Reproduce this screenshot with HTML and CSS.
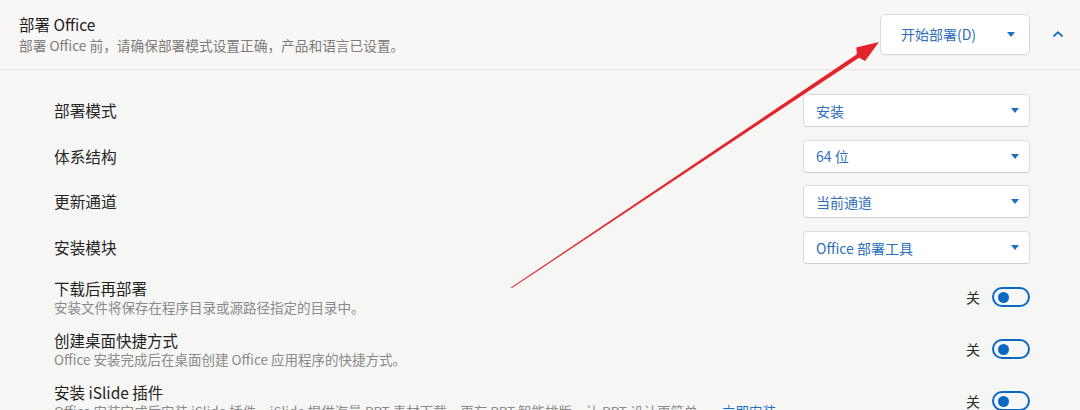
FILE: index.html
```html
<!DOCTYPE html>
<html lang="zh-CN">
<head>
<meta charset="utf-8">
<title>部署 Office</title>
<link rel="stylesheet" href="styles.css">
</head>
<body>
<div class="page">
  <header class="header">
    <div class="head-text">
      <div class="title">部署 Office</div>
      <div class="subtitle">部署 Office 前，请确保部署模式设置正确，产品和语言已设置。</div>
    </div>
    <div class="head-actions">
      <button class="split-btn">
        <span class="split-label">开始部署(D)</span>
        <span class="caret"></span>
      </button>
      <div class="chev-wrap">
        <svg class="chev" width="10" height="6" viewBox="0 0 10 6"><path d="M1 5 L5 1.2 L9 5" fill="none" stroke="#1a6fc4" stroke-width="1.8" stroke-linecap="round" stroke-linejoin="round"/></svg>
      </div>
    </div>
  </header>

  <main class="content">
    <div class="select-rows">
      <div class="select-row">
        <span class="label">部署模式</span>
        <div class="combo"><span>安装</span><span class="caret"></span></div>
      </div>
      <div class="select-row">
        <span class="label">体系结构</span>
        <div class="combo"><span>64 位</span><span class="caret"></span></div>
      </div>
      <div class="select-row">
        <span class="label">更新通道</span>
        <div class="combo"><span>当前通道</span><span class="caret"></span></div>
      </div>
      <div class="select-row">
        <span class="label">安装模块</span>
        <div class="combo"><span>Office 部署工具</span><span class="caret"></span></div>
      </div>
    </div>

    <div class="toggle-rows">
      <div class="toggle-row">
        <div class="t-text">
          <div class="t-title">下载后再部署</div>
          <div class="t-desc">安装文件将保存在程序目录或源路径指定的目录中。</div>
        </div>
        <div class="t-ctrl"><span class="t-state">关</span><span class="switch"><span class="knob"></span></span></div>
      </div>
      <div class="toggle-row">
        <div class="t-text">
          <div class="t-title">创建桌面快捷方式</div>
          <div class="t-desc">Office 安装完成后在桌面创建 Office 应用程序的快捷方式。</div>
        </div>
        <div class="t-ctrl"><span class="t-state">关</span><span class="switch"><span class="knob"></span></span></div>
      </div>
      <div class="toggle-row">
        <div class="t-text">
          <div class="t-title">安装 iSlide 插件</div>
          <div class="t-desc">Office 安装完成后安装 iSlide 插件，iSlide 提供海量 PPT 素材下载，更有 PPT 智能排版，让 PPT 设计更简单。 <a class="link">立即安装</a></div>
        </div>
        <div class="t-ctrl"><span class="t-state">关</span><span class="switch"><span class="knob"></span></span></div>
      </div>
    </div>
  </main>

  <svg class="annot" width="1080" height="410" viewBox="0 0 1080 410">
    <polygon fill="#e5232a" points="511,287.6 856.9,54.3 856.3,47.5 879,42 865.1,60.9 859.1,57.7 511.6,288.2"/>
  </svg>
</div>
</body>
</html>
```

FILE: styles.css
```css
* { box-sizing: border-box; }
html, body { margin: 0; padding: 0; }
body {
  width: 1080px;
  height: 410px;
  overflow: hidden;
  background: #f6f6f5;
  font-family: "Segoe UI", "Noto Sans CJK SC", "Noto Sans", sans-serif;
  color: #1f1f1f;
}
.page { position: relative; width: 1080px; height: 410px; overflow: hidden; }

.header {
  height: 70px;
  background: #f9f7f5;
  border-bottom: 1px solid #e7e3e0;
  display: flex;
  align-items: center;
  justify-content: space-between;
  padding: 0 0 0 19px;
}
.head-text { display: flex; flex-direction: column; margin-top: 1px; }
.title { font-size: 15.5px; line-height: 21px; color: #1c1c1c; }
.subtitle { font-size: 13.7px; line-height: 21px; color: #7b7b7b; }

.head-actions { display: flex; align-items: center; margin-top: -1px; }
.split-btn {
  width: 150px;
  height: 41px;
  background: #ffffff;
  border: 1px solid #dcdad8;
  border-radius: 5px;
  box-shadow: 0 1px 1px rgba(0,0,0,0.04);
  display: flex;
  align-items: center;
  justify-content: space-between;
  padding: 0 14px 0 20px;
  font-family: inherit;
  cursor: default;
}
.split-label { font-size: 14px; color: #2f6fba; }
.caret {
  width: 0; height: 0;
  border-left: 4.5px solid transparent;
  border-right: 4.5px solid transparent;
  border-top: 5px solid #1a6fc4;
}
.chev-wrap { width: 50px; display: flex; justify-content: flex-start; padding-left: 23px; }
.chev { display: block; }

.content { padding: 24px 50px 0 54px; }
.select-rows { display: flex; flex-direction: column; gap: 12.7px; }
.select-row { display: flex; justify-content: space-between; align-items: center; height: 33px; }
.label { font-size: 15.7px; color: #262626; }
.combo {
  width: 227px;
  height: 33px;
  background: #ffffff;
  border: 1px solid #dedcda;
  border-bottom-color: #cfcdcb;
  border-radius: 4px;
  display: flex;
  align-items: center;
  justify-content: space-between;
  padding: 0 10px 0 12px;
  font-size: 14px;
  color: #2f6fba;
}

.toggle-rows { margin-top: 14px; display: flex; flex-direction: column; }
.toggle-row { height: 52px; display: flex; justify-content: space-between; align-items: flex-start; }
.t-title { font-size: 15.5px; line-height: 20px; color: #1f1f1f; }
.t-desc { font-size: 13.5px; line-height: 19px; color: #8a8a8a; white-space: nowrap; }
.link { color: #1a6fc4; margin-left: 8px; }
.t-ctrl { display: flex; align-items: center; gap: 12px; margin-top: 9px; }
.t-state { font-size: 14px; color: #2a2a2a; }
.switch {
  width: 38px;
  height: 20px;
  border: 2px solid #0a67c4;
  border-radius: 10px;
  display: flex;
  align-items: center;
  padding-left: 4px;
}
.knob { width: 11px; height: 11px; border-radius: 50%; background: #0a67c4; }

.annot { position: absolute; left: 0; top: 0; pointer-events: none; }
```
